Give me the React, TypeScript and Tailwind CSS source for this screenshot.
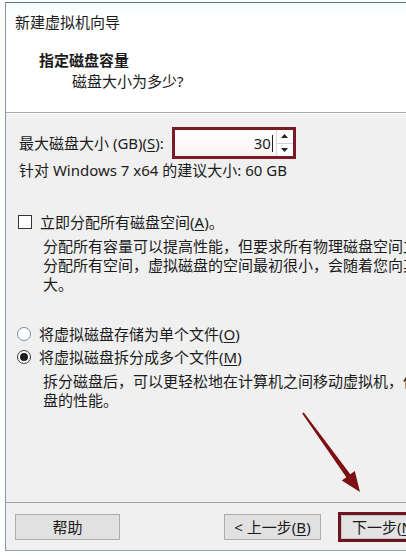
import React from "react"

const font = { fontFamily: '"Noto Sans", "Noto Sans CJK SC", sans-serif' }

const Acc = ({ k }: { k: string }) => (
  <>
    (<span className="underline underline-offset-2">{k}</span>)
  </>
)

const Radio = ({ checked }: { checked?: boolean }) => (
  <span className={`flex items-center justify-center w-[14px] h-[14px] rounded-full border bg-white ${checked ? "border-[#333]" : "border-[#7a8a99]"}`}>
    {checked && <span className="w-[8px] h-[8px] rounded-full bg-[#1e1e1e]" />}
  </span>
)

const App = () => {
  return (
    <div className="relative w-[406px] h-[556px] bg-white overflow-hidden text-[15px] leading-[20px] text-[#1b1b1b]" style={font}>
      {/* dialog window */}
      <div className="ml-[5px] mt-[2px] w-[440px] h-[549px] flex flex-col border-l border-t border-b border-l-[#7c9ab3] border-t-[#56737f] border-b-[#8aa6bd]">
        {/* header */}
        <div className="h-[110px] bg-gradient-to-b from-[#f3fbfb] to-white to-[12px] border-b border-[#a9a9a9]">
          <div className="pt-[9px] pl-[9px]">新建虚拟机向导</div>
          <div className="mt-[18px] pl-[33px] font-bold">指定磁盘容量</div>
          <div className="mt-[1px] pl-[66px]">磁盘大小为多少?</div>
        </div>

        {/* body */}
        <div className="flex-1 bg-[#f0f0f0] border-t border-white">
          <div className="pt-[13px] pl-[13px] flex items-center">
            <span>最大磁盘大小 (GB)<Acc k="S" />:</span>
            <div className="ml-[8px] w-[124px] h-[32px] border-[3px] border-[#7a1a24] bg-white flex">
              <div className="flex-1 flex items-center justify-end pr-[3px] bg-gradient-to-b from-white to-[#fbf3f3]">
                <span>30</span>
                <span className="ml-[1px] w-[1px] h-[17px] bg-[#222]" />
              </div>
              <div className="w-[17px] flex flex-col border-l border-[#d8d8d8]">
                <div className="flex-1 flex items-center justify-center border-b border-[#cfcfcf]">
                  <svg width="7" height="4" viewBox="0 0 7 4"><path d="M0 4 L3.5 0 L7 4 Z" fill="#222" /></svg>
                </div>
                <div className="flex-1 flex items-center justify-center">
                  <svg width="7" height="4" viewBox="0 0 7 4"><path d="M0 0 L3.5 4 L7 0 Z" fill="#222" /></svg>
                </div>
              </div>
            </div>
          </div>
          <div className="mt-[1px] pl-[13px]">针对 Windows 7 x64 的建议大小: 60 GB</div>

          <div className="mt-[32px] pl-[12px] flex items-center">
            <span className="w-[14px] h-[14px] border border-[#333] bg-white" />
            <span className="ml-[8px]">立即分配所有磁盘空间<Acc k="A" />。</span>
          </div>
          <div className="mt-[5px] pl-[37px] leading-[19px] whitespace-nowrap">
            <div>分配所有容量可以提高性能，但要求所有物理磁盘空间立</div>
            <div>分配所有空间，虚拟磁盘的空间最初很小，会随着您向其</div>
            <div>大。</div>
          </div>

          <div className="mt-[30px] pl-[11px] flex items-center">
            <Radio />
            <span className="ml-[8px]">将虚拟磁盘存储为单个文件<Acc k="O" /></span>
          </div>
          <div className="mt-[3px] pl-[11px] flex items-center">
            <Radio checked />
            <span className="ml-[8px]">将虚拟磁盘拆分成多个文件<Acc k="M" /></span>
          </div>
          <div className="mt-[5px] pl-[37px] leading-[19px] whitespace-nowrap">
            <div>拆分磁盘后，可以更轻松地在计算机之间移动虚拟机，但</div>
            <div>盘的性能。</div>
          </div>
        </div>

        {/* footer */}
        <div className="h-[48px] bg-[#f0f0f0] border-t border-[#a0a0a0] flex items-start pt-[11px] pl-[9px]">
          <button className="w-[105px] h-[26px] bg-[#e1e1e1] border border-[#adadad] leading-[20px]">帮助</button>
          <button className="ml-[104px] w-[97px] h-[26px] bg-[#e1e1e1] border border-[#adadad] leading-[20px] whitespace-nowrap">
            &lt; 上一步<Acc k="B" />
          </button>
          <div className="ml-[17px] -mt-[2px] w-[100px] h-[30px] border-[3px] border-[#6e1520] flex">
            <button className="flex-1 bg-[#e3e3e3] border border-[#c4c4c4] leading-[20px] whitespace-nowrap text-left pl-[10px]">
              下一步<Acc k="N" />
            </button>
          </div>
        </div>
      </div>

      {/* annotation arrow */}
      <svg className="absolute inset-0 pointer-events-none" width="406" height="556" viewBox="0 0 406 556">
        <polygon
          points="302.2,413.6 346.3,477.3 341.8,480.5 360,492 354.8,471.1 350.3,474.3 303.8,412.4"
          fill="#7b1014"
        />
      </svg>
    </div>
  )
}

export default App
